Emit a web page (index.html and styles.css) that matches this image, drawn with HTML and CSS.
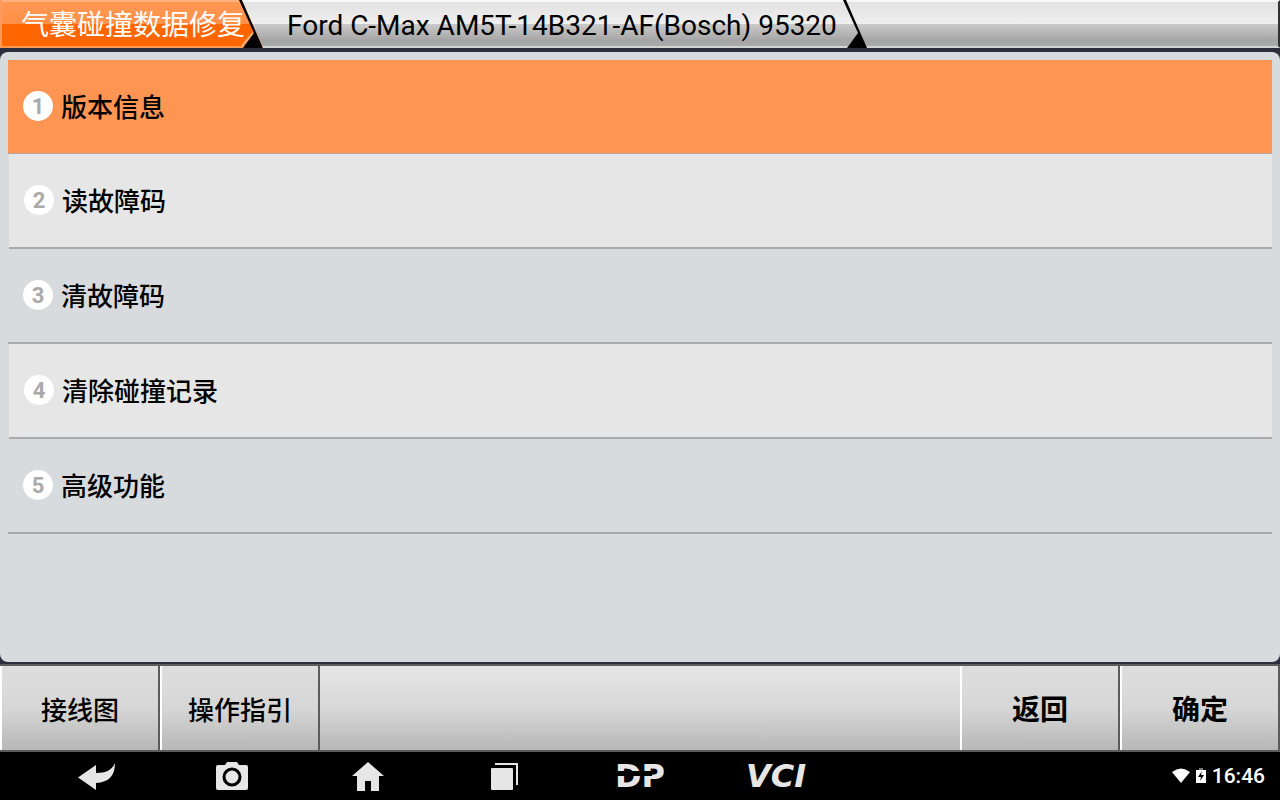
FILE: index.html
```html
<!DOCTYPE html>
<html lang="zh-CN">
<head>
    <meta charset="UTF-8">
    <meta name="viewport" content="width=device-width, initial-scale=1.0">
    <title>气囊碰撞数据修复</title>
    <link rel="stylesheet" href="styles.css">
</head>
<body>

    <!-- Breadcrumb tabs -->
    <nav class="tabs">
        <a href="#" class="tab active">
            气囊碰撞数据修复
            <svg class="tab-edge" width="24" height="48" viewBox="0 0 24 48">
                <path d="M3 46L14 33" stroke="#ffb27c" stroke-width="2"/>
                <path d="M0 0H3L24 48H4L15 33Z"/>
            </svg>
        </a>
        <a href="#" class="tab">
            Ford C-Max AM5T-14B321-AF(Bosch) 95320
            <svg class="tab-edge" width="24" height="48" viewBox="0 0 24 48">
                <path d="M0 0H3L24 48H4L15 33Z"/>
            </svg>
        </a>
    </nav>

    <!-- Function list -->
    <main class="panel">
        <ol class="menu">
            <li><button class="menu-item selected"><span class="number">1</span>版本信息</button></li>
            <li><button class="menu-item"><span class="number">2</span>读故障码</button></li>
            <li><button class="menu-item"><span class="number">3</span>清故障码</button></li>
            <li><button class="menu-item"><span class="number">4</span>清除碰撞记录</button></li>
            <li><button class="menu-item"><span class="number">5</span>高级功能</button></li>
        </ol>
    </main>

    <!-- Action buttons -->
    <footer class="toolbar">
        <button class="tool-btn">接线图</button>
        <button class="tool-btn">操作指引</button>
        <div class="toolbar-space"></div>
        <button class="tool-btn bold">返回</button>
        <button class="tool-btn bold">确定</button>
    </footer>

    <!-- System bar -->
    <div class="system-bar">
        <button class="sys-btn" aria-label="Back">
            <svg width="40" height="32" viewBox="0 0 40 32">
                <path d="M2 17.500L20 5V13C30 13 36 10 39 3C39 16 33 22 20 23V30Z"/>
            </svg>
        </button>
        <button class="sys-btn" aria-label="Screenshot">
            <svg width="32" height="32" viewBox="0 0 32 32">
                <path d="M2 5H9L11 2H21L23 5H30Q32 5 32 7V28Q32 30 30 30H2Q0 30 0 28V7Q0 5 2 5Z"/>
                <circle cx="16" cy="17" r="8" stroke="#000" stroke-width="3"/>
            </svg>
        </button>
        <button class="sys-btn" aria-label="Home">
            <svg width="32" height="32" viewBox="0 0 32 32">
                <path d="M16 2L32 16H27V31H19V21H13V31H5V16H0Z"/>
            </svg>
        </button>
        <button class="sys-btn" aria-label="Recent apps">
            <svg width="28" height="32" viewBox="0 0 28 32">
                <rect x="1" y="8" width="22" height="22" rx="1"/>
                <path d="M5 3H28V25H26V5H5Z"/>
            </svg>
        </button>
        <button class="sys-btn logo-dp">DP</button>
        <button class="sys-btn logo-vci">VCI</button>

        <div class="status">
            <svg width="18" height="16" viewBox="0 0 18 16">
                <path d="M0 4Q9 -3 18 4L9 15Z"/>
            </svg>
            <svg width="10" height="16" viewBox="0 0 10 16">
                <path d="M3 0H7V2H3Z" fill="#777"/>
                <path d="M0 2H10V15H0Z"/>
                <path d="M6 3L2 9H5L4 13L8 7H5Z" fill="#000"/>
            </svg>
            <span class="clock">16:46</span>
        </div>
    </div>

</body>
</html>
```
FILE: styles.css
```css
* {
    box-sizing: border-box;
}

body {
    margin: 0;
    min-height: 100vh;
    display: flex;
    flex-direction: column;
    background-color: #2b2e3c;
    color: #000;
    font-family: Roboto, "Noto Sans CJK SC", sans-serif;
}

button {
    margin: 0;
    padding: 0;
    border: none;
    background: none;
    color: inherit;
    font-family: inherit;
    cursor: pointer;
}

/* Breadcrumb tabs */
.tabs {
    display: flex;
    height: 48px;
    margin-bottom: 4px;
    border-top: 2px solid #f8f8f8;
    border-right: 2px solid #333;
    border-bottom: 2px solid #d0d4d2;
    background: linear-gradient(#e2e2e2, #efefef 22px, #cbcbcb 22px, #a6a6a6 38px, #a9a9a9);
}

.tab {
    position: relative;
    height: 48px;
    margin-top: -2px;
    padding: 0 30px 0 24px;
    color: #000;
    font-size: 28px;
    line-height: 52px;
    text-decoration: none;
    white-space: nowrap;
}

.tab.active {
    padding: 0 18px 0 19px;
    border-left: 2px solid #ff9a5c;
    background: linear-gradient(#ffb07c 2px, #ff9852 2px, #ff9048 24px, #ff6600 24px, #ff6600 46px, #ff9a52 46px);
    clip-path: polygon(0 0, calc(100% - 21px) 0, 100% 100%, 0 100%);
    color: #fff;
}

.tab-edge {
    position: absolute;
    top: 0;
    right: 0;
}

/* Function list */
.panel {
    flex: 1;
    padding: 8px;
    border-radius: 8px;
    background-color: #d7dbde;
}

.menu {
    margin: 0;
    padding: 0;
    list-style: none;
}

.menu-item {
    display: flex;
    align-items: center;
    gap: 8px;
    width: 100%;
    height: 95px;
    padding: 0 15px 2px;
    border-bottom: 2px solid #a8aaab;
    font-size: 26px;
    font-weight: 500;
    text-align: left;
}

.menu li:nth-child(even) {
    padding-left: 1px;
}

.menu li:nth-child(even) .menu-item {
    background-color: #e6e6e6;
}

.menu-item.selected {
    height: 94px;
    border-bottom: 1px solid #b5a49c;
    background-color: #ff9552;
}

.number {
    width: 30px;
    height: 30px;
    border-radius: 50%;
    background-color: #fff;
    color: #aaa;
    font-size: 22px;
    font-weight: bold;
    line-height: 32px;
    text-align: center;
}

/* Action buttons */
.toolbar {
    display: flex;
    height: 88px;
    margin-top: 2px;
    border-top: 2px solid #5c5c5c;
    border-bottom: 2px solid #5c5c5c;
}

.tool-btn {
    width: 160px;
    border-left: 2px solid #fff;
    border-right: 2px solid #5c5c5c;
    background: linear-gradient(#dedede, #d6d6d6 50%, #b7b7b7);
    font-size: 26px;
    font-weight: 500;
}

.tool-btn.bold {
    font-size: 28px;
    font-weight: bold;
}

.toolbar-space {
    flex: 1;
    background: linear-gradient(#e6e6e6, #d8d8d8 50%, #b7b7b7);
}

/* System bar */
.system-bar {
    display: flex;
    align-items: center;
    height: 48px;
    padding: 0 15px 0 28px;
    background-color: #000;
    color: #e6e6e6;
}

.sys-btn {
    display: flex;
    align-items: center;
    justify-content: center;
    width: 136px;
    height: 48px;
}

.sys-btn svg {
    fill: #e6e6e6;
}

.logo-dp,
.logo-vci {
    position: relative;
    font-family: "DejaVu Sans", sans-serif;
    font-size: 32px;
    font-weight: bold;
}

/* Cut through the DP letters */
.logo-dp::after {
    content: "";
    position: absolute;
    top: 19px;
    left: 40px;
    width: 40px;
    height: 5px;
    background-color: #000;
}

.logo-vci {
    font-style: italic;
}

.status {
    display: flex;
    align-items: center;
    gap: 6px;
    margin-left: auto;
    color: #fff;
}

.status svg {
    fill: #fff;
}

.clock {
    font-size: 21px;
    font-weight: 500;
    line-height: 50px;
}
```
